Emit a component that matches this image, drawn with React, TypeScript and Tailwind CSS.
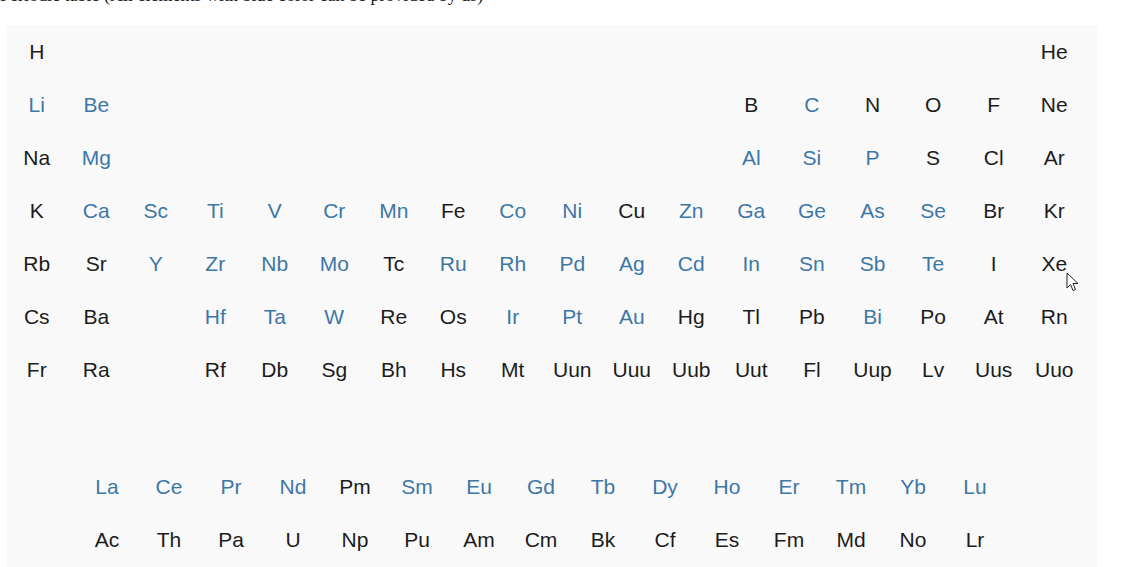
import React from "react";

type El = { s: string; c: number; b?: boolean };

// main table rows: symbol, column (1-18), blue = can be provided
const rows: El[][] = [
  [
    { s: "H", c: 1 },
    { s: "He", c: 18 },
  ],
  [
    { s: "Li", c: 1, b: true },
    { s: "Be", c: 2, b: true },
    { s: "B", c: 13 },
    { s: "C", c: 14, b: true },
    { s: "N", c: 15 },
    { s: "O", c: 16 },
    { s: "F", c: 17 },
    { s: "Ne", c: 18 },
  ],
  [
    { s: "Na", c: 1 },
    { s: "Mg", c: 2, b: true },
    { s: "Al", c: 13, b: true },
    { s: "Si", c: 14, b: true },
    { s: "P", c: 15, b: true },
    { s: "S", c: 16 },
    { s: "Cl", c: 17 },
    { s: "Ar", c: 18 },
  ],
  "K Ca* Sc* Ti* V* Cr* Mn* Fe Co* Ni* Cu Zn* Ga* Ge* As* Se* Br Kr"
    .split(" ")
    .map((t, i) => ({ s: t.replace("*", ""), c: i + 1, b: t.endsWith("*") })),
  "Rb Sr Y* Zr* Nb* Mo* Tc Ru* Rh* Pd* Ag* Cd* In* Sn* Sb* Te* I Xe"
    .split(" ")
    .map((t, i) => ({ s: t.replace("*", ""), c: i + 1, b: t.endsWith("*") })),
  "Cs Ba _ Hf* Ta* W* Re Os Ir* Pt* Au* Hg Tl Pb Bi* Po At Rn"
    .split(" ")
    .map((t, i) => ({ s: t.replace("*", ""), c: i + 1, b: t.endsWith("*") })),
  "Fr Ra _ Rf Db Sg Bh Hs Mt Uun Uuu Uub Uut Fl Uup Lv Uus Uuo"
    .split(" ")
    .map((t, i) => ({ s: t, c: i + 1 })),
];

const lanth = "La* Ce* Pr* Nd* Pm Sm* Eu* Gd* Tb* Dy* Ho* Er* Tm* Yb* Lu*".split(" ");
const actin = "Ac Th Pa U Np Pu Am Cm Bk Cf Es Fm Md No Lr".split(" ");

const colStart = [
  "",
  "col-start-1",
  "col-start-2",
  "col-start-3",
  "col-start-4",
  "col-start-5",
  "col-start-6",
  "col-start-7",
  "col-start-8",
  "col-start-9",
  "col-start-10",
  "col-start-11",
  "col-start-12",
  "col-start-13",
  "col-start-14",
  "col-start-15",
  "col-start-16",
  "col-start-17",
  "col-start-18",
];

const rowStart = ["row-start-1", "row-start-2", "row-start-3", "row-start-4", "row-start-5", "row-start-6", "row-start-7"];

const Cell: React.FC<{ s: string; b?: boolean; className?: string }> = ({ s, b, className }) => (
  <div
    className={`h-[53px] flex items-center justify-center ${b ? "text-[#3d77a6]" : "text-[#1c1c1c]"} ${className ?? ""}`}
  >
    {s}
  </div>
);

const Cursor = () => (
  <svg
    className="absolute left-[1059px] top-[247px]"
    width="14"
    height="21"
    viewBox="0 0 14 21"
  >
    <path
      d="M1 1 L1 16 L4.5 12.5 L7 18.5 L9.5 17.5 L7 11.5 L12 11.5 Z"
      fill="#fff"
      stroke="#222"
      strokeWidth="1"
      strokeLinejoin="round"
    />
  </svg>
);

export default function App() {
  return (
    <div className="w-[1123px] h-[567px] overflow-hidden bg-white font-['Liberation_Sans',Arial,sans-serif]">
      <div className="-mt-[14px] h-[18px] text-[18px] leading-[18px] text-[#222] font-['Liberation_Serif',serif] whitespace-nowrap">
        Periodic table (All elements with blue color can be provided by us)
      </div>
      <div className="relative ml-[7px] mt-[22px] w-[1090px] h-[560px] bg-[#f9f9f9] text-[21px]">
        <div className="-mt-[1px] grid grid-cols-[repeat(12,59.5px)_repeat(6,60.6px)]">
          {rows.map((r, ri) =>
            r
              .filter((e) => e.s !== "_")
              .map((e) => (
                <Cell key={e.s} s={e.s} b={e.b} className={`${colStart[e.c]} ${rowStart[ri]}`} />
              ))
          )}
        </div>
        <div className="mt-[64px] ml-[69px] grid grid-cols-[repeat(15,62px)]">
          {lanth.map((t) => (
            <Cell key={t} s={t.replace("*", "")} b={t.endsWith("*")} />
          ))}
          {actin.map((t) => (
            <Cell key={t} s={t} />
          ))}
        </div>
        <Cursor />
      </div>
    </div>
  );
}
